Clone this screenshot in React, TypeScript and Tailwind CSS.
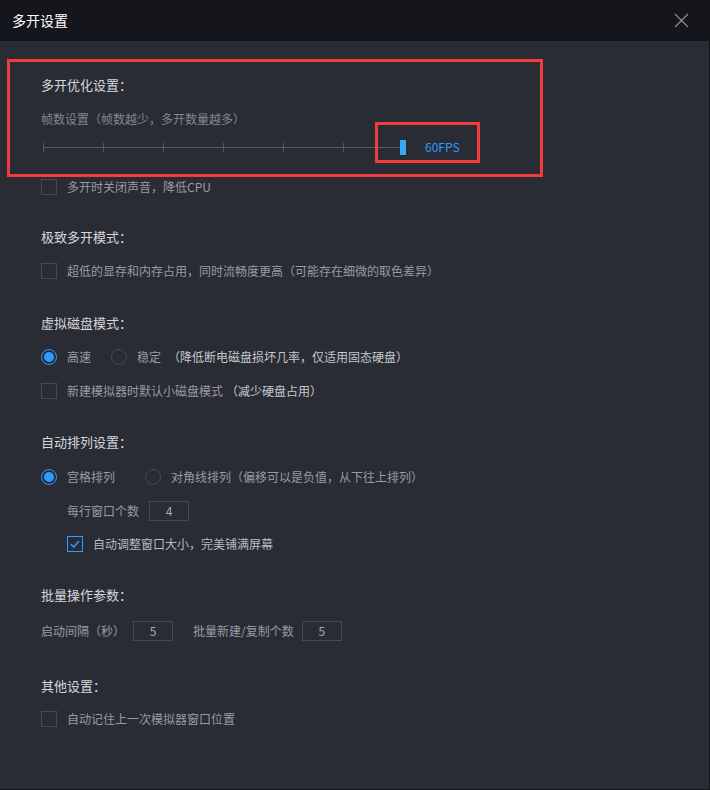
import React from "react";

const font = { fontFamily: '"Noto Sans CJK SC", "Noto Sans", sans-serif' };

function Heading({ children, className = "" }: { children: React.ReactNode; className?: string }) {
  return (
    <div className={`h-[20px] flex items-center text-[13px] text-[#d6d7da] ${className}`}>
      {children}
    </div>
  );
}

function Checkbox({ checked = false }: { checked?: boolean }) {
  if (checked) {
    return (
      <span className="w-[16px] h-[16px] border border-[#2f9bff] flex items-center justify-center shrink-0">
        <svg width="10" height="8" viewBox="0 0 10 8" fill="none">
          <path d="M1 4.2 L3.8 7 L9 1" stroke="#2f9bff" strokeWidth="1.6" />
        </svg>
      </span>
    );
  }
  return <span className="block w-[16px] h-[16px] border border-[#464953] shrink-0" />;
}

function Radio({ checked = false }: { checked?: boolean }) {
  if (checked) {
    return (
      <span className="w-[16px] h-[16px] rounded-full border border-[#2f9bff] flex items-center justify-center shrink-0">
        <span className="w-[10px] h-[10px] rounded-full bg-[#2f9bff]" />
      </span>
    );
  }
  return <span className="block w-[16px] h-[16px] rounded-full border border-[#464953] shrink-0" />;
}

function NumBox({ value }: { value: string }) {
  return (
    <span className="w-[40px] h-[20px] border border-[#464953] flex items-center justify-center text-[12px] text-[#a9aaad] shrink-0">
      {value}
    </span>
  );
}

function Slider() {
  const ticks = [0, 60, 120, 180, 240, 300];
  return (
    <div className="h-[20px] flex items-center">
      <div className="relative w-[365px] h-[20px]">
        <svg width="360" height="20" className="absolute left-[2px] top-0">
          <line x1="0" y1="10.5" x2="358" y2="10.5" stroke="#55585f" strokeWidth="1" />
          {ticks.map((t) => (
            <line key={t} x1={t + 0.5} y1="6" x2={t + 0.5} y2="15" stroke="#55585f" strokeWidth="1" />
          ))}
        </svg>
        <span className="absolute left-[359px] top-[3px] w-[6px] h-[15px] bg-[#38a8f5]" />
      </div>
      <span className="ml-[19px] text-[12px] text-[#2f9bff]">60FPS</span>
    </div>
  );
}

export default function App() {
  return (
    <div
      className="relative w-[710px] h-[790px] bg-[#292c35] border-r border-b border-[#14151a] overflow-hidden"
      style={font}
    >
      {/* Title bar */}
      <div className="h-[41px] bg-[#15161b] flex items-center justify-between pl-[12px] pr-[20px]">
        <span className="text-[14px] text-white">多开设置</span>
        <svg width="15" height="15" viewBox="0 0 15 15">
          <path d="M1 1 L14 14 M14 1 L1 14" stroke="#8d8e92" strokeWidth="1.2" />
        </svg>
      </div>

      {/* Settings */}
      <div className="pl-[41px] flex flex-col text-[12px] text-[#9a9ba0]">
        <Heading className="mt-[34px]">多开优化设置：</Heading>
        <div className="mt-[14px] h-[20px] flex items-center text-[#85878c]">帧数设置（帧数越少，多开数量越多）</div>
        <div className="mt-[8px]">
          <Slider />
        </div>
        <div className="mt-[20px] h-[20px] flex items-center gap-[10px]">
          <Checkbox />
          <span>多开时关闭声音，降低CPU</span>
        </div>

        <Heading className="mt-[30px]">极致多开模式：</Heading>
        <div className="mt-[14px] h-[20px] flex items-center gap-[10px]">
          <Checkbox />
          <span>超低的显存和内存占用，同时流畅度更高（可能存在细微的取色差异）</span>
        </div>

        <Heading className="mt-[32px]">虚拟磁盘模式：</Heading>
        <div className="mt-[14px] h-[20px] flex items-center">
          <Radio checked />
          <span className="ml-[10px]">高速</span>
          <span className="ml-[20px]">
            <Radio />
          </span>
          <span className="ml-[10px]">稳定</span>
          <span className="ml-[7px] text-[#c6c7ca]">（降低断电磁盘损坏几率，仅适用固态硬盘）</span>
        </div>
        <div className="mt-[14px] h-[20px] flex items-center">
          <Checkbox />
          <span className="ml-[10px]">新建模拟器时默认小磁盘模式</span>
          <span className="ml-[3px] text-[#c6c7ca]">（减少硬盘占用）</span>
        </div>

        <Heading className="mt-[31px]">自动排列设置：</Heading>
        <div className="mt-[15px] h-[20px] flex items-center">
          <Radio checked />
          <span className="ml-[10px]">宫格排列</span>
          <span className="ml-[30px]">
            <Radio />
          </span>
          <span className="ml-[10px]">对角线排列（偏移可以是负值，从下往上排列）</span>
        </div>
        <div className="mt-[14px] h-[20px] flex items-center pl-[26px]">
          <span>每行窗口个数</span>
          <span className="ml-[10px]">
            <NumBox value="4" />
          </span>
        </div>
        <div className="mt-[13px] h-[20px] flex items-center gap-[10px] pl-[26px]">
          <Checkbox checked />
          <span className="text-[#b9babd]">自动调整窗口大小，完美铺满屏幕</span>
        </div>

        <Heading className="mt-[31px]">批量操作参数：</Heading>
        <div className="mt-[16px] h-[20px] flex items-center">
          <span>启动间隔（秒）</span>
          <span className="ml-[8px]">
            <NumBox value="5" />
          </span>
          <span className="ml-[20px]">批量新建/复制个数</span>
          <span className="ml-[8px]">
            <NumBox value="5" />
          </span>
        </div>

        <Heading className="mt-[35px]">其他设置：</Heading>
        <div className="mt-[13px] h-[20px] flex items-center gap-[10px]">
          <Checkbox />
          <span>自动记住上一次模拟器窗口位置</span>
        </div>
      </div>

      {/* Annotation boxes */}
      <div className="absolute left-[7px] top-[59px] w-[536px] h-[118px] border-[3px] border-[#f23b3b]" />
      <div className="absolute left-[375px] top-[122px] w-[105px] h-[41px] border-[3px] border-[#f23b3b]" />
    </div>
  );
}
